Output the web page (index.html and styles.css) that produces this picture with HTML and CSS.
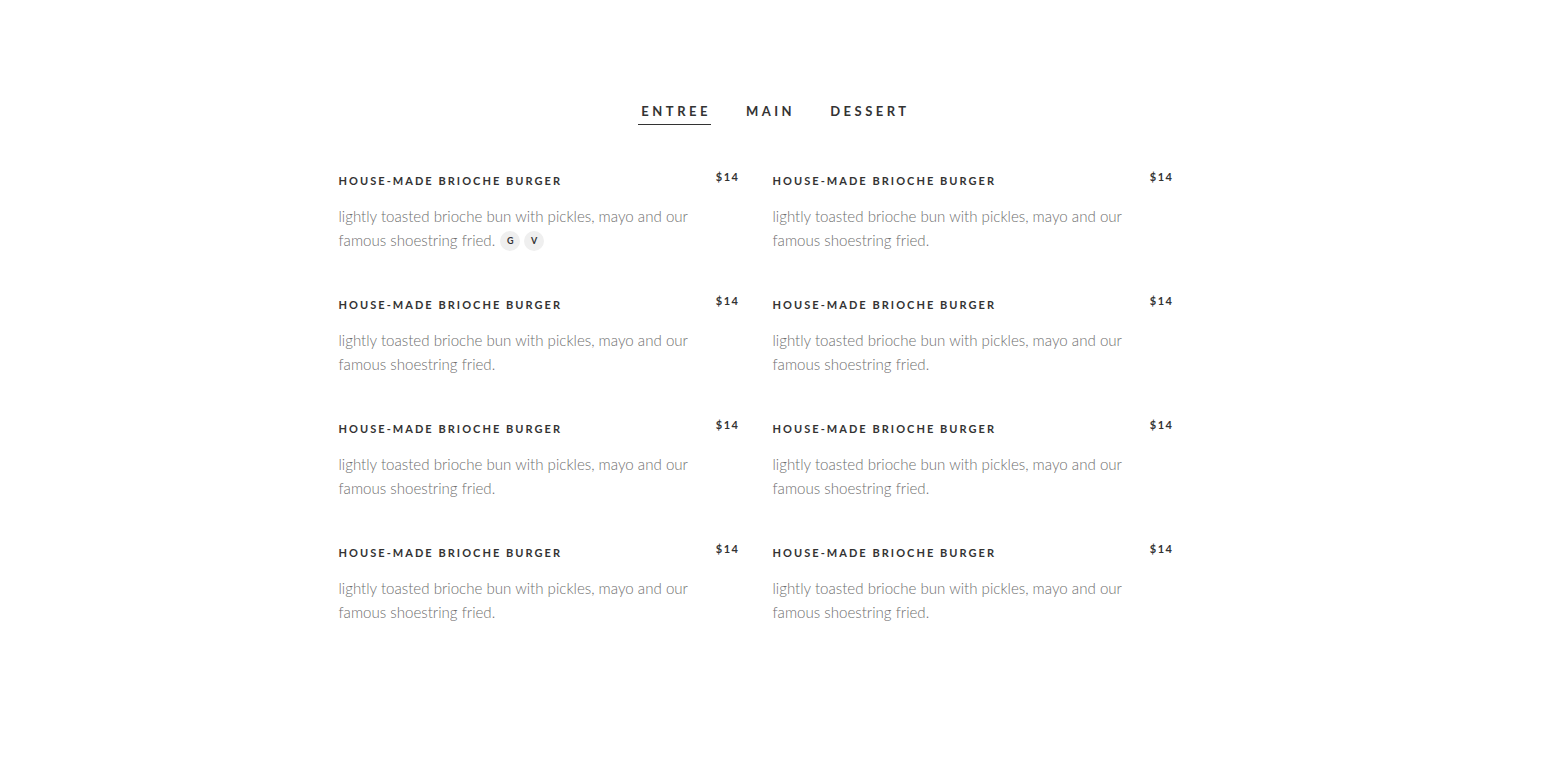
FILE: index.html
```html
<!DOCTYPE html>
<html>
<head>
<meta charset="utf-8">
<link rel="stylesheet" href="styles.css">
</head>
<body>
<div class="menu">
  <nav class="tabs">
    <span class="tab active">ENTREE</span>
    <span class="tab">MAIN</span>
    <span class="tab">DESSERT</span>
  </nav>
  <div class="grid">
    <div class="item">
      <div class="head"><h3 class="title">HOUSE-MADE BRIOCHE BURGER</h3><span class="price">$14</span></div>
      <p class="desc">lightly toasted brioche bun with pickles, mayo and our famous shoestring fried.<span class="badges"><span class="badge">G</span><span class="badge">V</span></span></p>
    </div>
    <div class="item">
      <div class="head"><h3 class="title">HOUSE-MADE BRIOCHE BURGER</h3><span class="price">$14</span></div>
      <p class="desc">lightly toasted brioche bun with pickles, mayo and our famous shoestring fried.</p>
    </div>
    <div class="item">
      <div class="head"><h3 class="title">HOUSE-MADE BRIOCHE BURGER</h3><span class="price">$14</span></div>
      <p class="desc">lightly toasted brioche bun with pickles, mayo and our famous shoestring fried.</p>
    </div>
    <div class="item">
      <div class="head"><h3 class="title">HOUSE-MADE BRIOCHE BURGER</h3><span class="price">$14</span></div>
      <p class="desc">lightly toasted brioche bun with pickles, mayo and our famous shoestring fried.</p>
    </div>
    <div class="item">
      <div class="head"><h3 class="title">HOUSE-MADE BRIOCHE BURGER</h3><span class="price">$14</span></div>
      <p class="desc">lightly toasted brioche bun with pickles, mayo and our famous shoestring fried.</p>
    </div>
    <div class="item">
      <div class="head"><h3 class="title">HOUSE-MADE BRIOCHE BURGER</h3><span class="price">$14</span></div>
      <p class="desc">lightly toasted brioche bun with pickles, mayo and our famous shoestring fried.</p>
    </div>
    <div class="item">
      <div class="head"><h3 class="title">HOUSE-MADE BRIOCHE BURGER</h3><span class="price">$14</span></div>
      <p class="desc">lightly toasted brioche bun with pickles, mayo and our famous shoestring fried.</p>
    </div>
    <div class="item">
      <div class="head"><h3 class="title">HOUSE-MADE BRIOCHE BURGER</h3><span class="price">$14</span></div>
      <p class="desc">lightly toasted brioche bun with pickles, mayo and our famous shoestring fried.</p>
    </div>
  </div>
</div>
</body>
</html>
```
FILE: styles.css
```css
* { box-sizing: border-box; }
body {
  margin: 0;
  background: #fff;
  font-family: "Lato", "Open Sans", sans-serif;
  color: #333;
}
.menu {
  width: 868px;
  margin: 0 auto;
  padding-top: 101px;
}
.tabs {
  display: flex;
  justify-content: center;
  gap: 32px;
  margin-left: 3px;
}
.tab {
  font-size: 13px;
  font-weight: 700;
  letter-spacing: 3.5px;
  color: #333;
  line-height: 20px;
  padding: 0 0 3px 3px;
}
.tab.active {
  border-bottom: 1px solid #333;
}
.grid {
  display: grid;
  grid-template-columns: 434px 434px;
  margin-top: 45px;
}
.item {
  padding-right: 34px;
  height: 124px;
}
.head {
  display: flex;
  justify-content: space-between;
  align-items: flex-start;
}
.title {
  margin: 1px 0 0;
  font-size: 11px;
  font-weight: 700;
  letter-spacing: 2.05px;
  line-height: 20px;
  color: #333;
}
.price {
  font-size: 11px;
  font-weight: 700;
  letter-spacing: 1.5px;
  line-height: 12px;
  margin-top: 1px;
  margin-right: -1px;
  color: #333;
}
.desc {
  margin: 13px 0 0;
  font-size: 15.1px;
  font-weight: 300;
  line-height: 24px;
  color: #6f6f6f;
  padding-right: 40px;
}
.badges {
  display: inline-flex;
  gap: 4px;
  margin-left: 5px;
  vertical-align: middle;
  margin-top: -3px;
}
.badge {
  display: inline-flex;
  align-items: center;
  justify-content: center;
  width: 20px;
  height: 20px;
  border-radius: 50%;
  background: #efefef;
  font-size: 9px;
  line-height: 9px;
  font-weight: 700;
  color: #333;
}
```
